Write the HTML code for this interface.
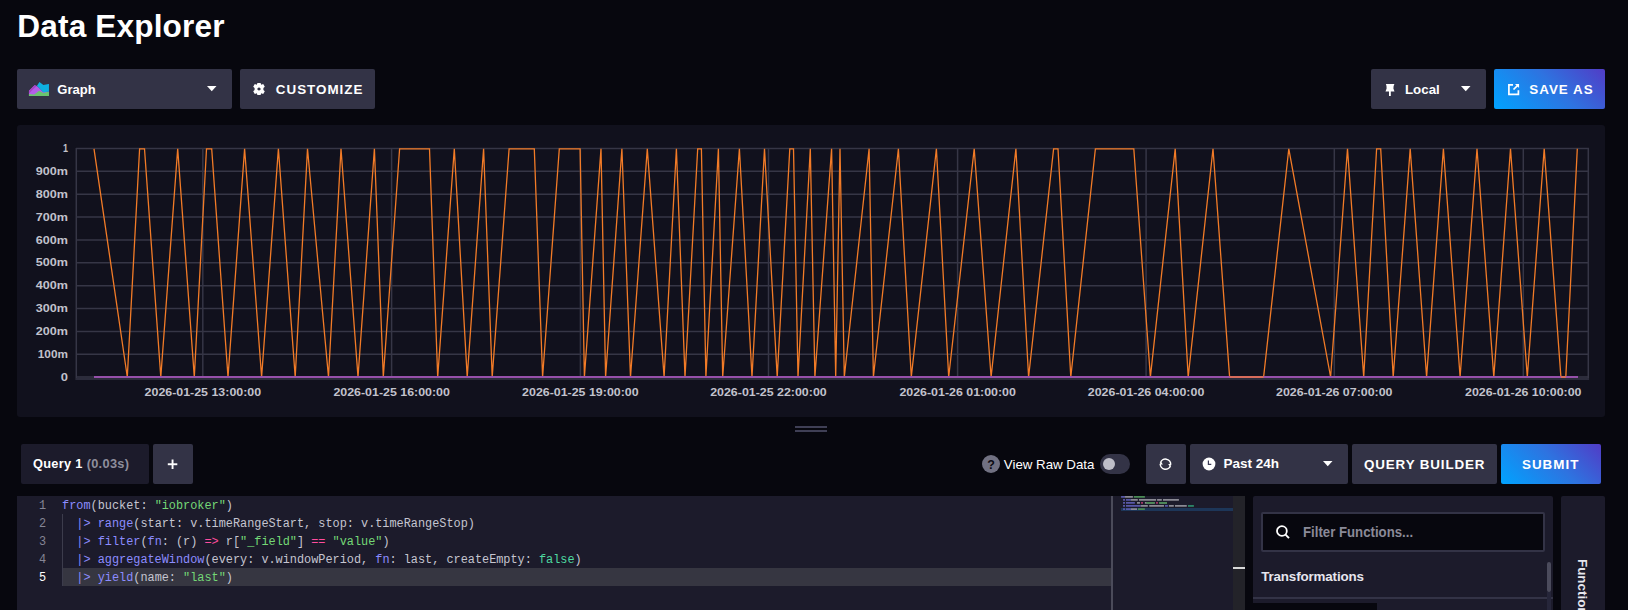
<!DOCTYPE html>
<html><head><meta charset="utf-8">
<style>
*{margin:0;padding:0;box-sizing:border-box}
html,body{width:1628px;height:610px;overflow:hidden;background:#07070e;font-family:"Liberation Sans",sans-serif;color:#fff}
.a{position:absolute}
.t{position:absolute;white-space:nowrap;line-height:1;transform-origin:0 0}
.btn{position:absolute;background:#333346;border-radius:2px}
.code{position:absolute;font-family:"Liberation Mono",monospace;font-size:11.87px;line-height:18px;white-space:pre;color:#c5c5d0}
.kw{color:#8c8cff}.st{color:#74d876}.op{color:#ff4d9e}.bo{color:#4ed8a0}
</style></head><body>

<!-- title -->
<div class="t" id="title" style="left:17.3px;top:10.5px;font-size:31.6px;font-weight:bold;letter-spacing:0.15px">Data Explorer</div>

<!-- top buttons -->
<div class="btn" style="left:17px;top:69px;width:215px;height:40px"></div>
<svg class="a" style="left:26px;top:79px" width="26" height="20" viewBox="0 0 793 610">
 <polygon fill="#b35ee8" points="90,360 260,190 330,215 380,250 530,400 700,370 700,515 90,515"/>
 <polygon fill="#a744c4" points="90,360 260,190 330,215 200,330 90,440"/>
 <polygon fill="#0fb0e0" points="330,215 410,95 530,180 690,150 700,150 700,380 530,410 380,250"/>
 <polygon fill="#6ac46e" points="90,455 250,470 400,360 530,430 650,395 700,395 700,515 90,515"/>
</svg>
<div class="t" id="graph" style="left:57.3px;top:82.8px;font-size:13px;font-weight:bold">Graph</div>
<svg class="a" style="left:207px;top:86px" width="10" height="6"><polygon fill="#fff" points="0,0 9.5,0 4.75,5.2"/></svg>

<div class="btn" style="left:240px;top:69px;width:135px;height:40px"></div>
<svg class="a" style="left:253px;top:83px" width="12" height="12" viewBox="-6 -6 12 12">
 <path fill="#fff" fill-rule="evenodd" d="M-1.6,-6 L1.6,-6 L2.2,-4.2 L4.2,-5 L5.8,-2.2 L4.4,-0.9 L4.4,0.9 L5.8,2.2 L4.2,5 L2.2,4.2 L1.6,6 L-1.6,6 L-2.2,4.2 L-4.2,5 L-5.8,2.2 L-4.4,0.9 L-4.4,-0.9 L-5.8,-2.2 L-4.2,-5 L-2.2,-4.2 Z M0,-1.6 A1.6,1.6 0 1 0 0.01,-1.6 Z"/>
</svg>
<div class="t" id="cust" style="left:275.8px;top:82.6px;font-size:13.4px;font-weight:bold;letter-spacing:1px">CUSTOMIZE</div>

<div class="btn" style="left:1371px;top:69px;width:115px;height:40px"></div>
<svg class="a" style="left:1385px;top:83px" width="10" height="14" viewBox="0 0 10 14">
 <path fill="#fff" d="M0.9,0.9 L9.4,0.9 Q8,3.5 8.4,5.5 L9.5,8.6 L0.5,8.6 L1.6,5.5 Q2,3.5 0.9,0.9 Z"/>
 <rect fill="#fff" x="4" y="8" width="1.8" height="5"/>
</svg>
<div class="t" id="local" style="left:1405px;top:83.2px;font-size:13.3px;font-weight:bold">Local</div>
<svg class="a" style="left:1461px;top:86px" width="10" height="6"><polygon fill="#fff" points="0,0 9.5,0 4.75,5.2"/></svg>

<div class="a" style="left:1494px;top:69px;width:111px;height:40px;border-radius:2px;background:linear-gradient(45deg,#00a3ff 0%,#2e73e0 55%,#513cc6 100%)"></div>
<svg class="a" style="left:1507px;top:83px" width="13" height="13" viewBox="0 0 13 13">
 <path fill="none" stroke="#fff" stroke-width="1.7" d="M6,1.9 L1.9,1.9 L1.9,11.4 L11.4,11.4 L11.4,7.2"/>
 <path fill="none" stroke="#fff" stroke-width="1.7" d="M6.5,6.5 L11.2,1.8"/>
 <polygon fill="#fff" points="8,1.05 12.05,1.05 12.05,5.1"/>
</svg>
<div class="t" id="saveas" style="left:1529.3px;top:82.6px;font-size:13.4px;font-weight:bold;letter-spacing:1px">SAVE AS</div>

<!-- chart panel -->
<div class="a" style="left:17px;top:125px;width:1588px;height:292px;background:#11111d;border-radius:3px"></div>
<svg class="a" style="left:0;top:0" width="1628" height="420">
 <g stroke="#363646" stroke-width="1.5"><line x1="76" y1="148.50" x2="1589" y2="148.50"/><line x1="76" y1="171.36" x2="1589" y2="171.36"/><line x1="76" y1="194.22" x2="1589" y2="194.22"/><line x1="76" y1="217.08" x2="1589" y2="217.08"/><line x1="76" y1="239.94" x2="1589" y2="239.94"/><line x1="76" y1="262.80" x2="1589" y2="262.80"/><line x1="76" y1="285.66" x2="1589" y2="285.66"/><line x1="76" y1="308.52" x2="1589" y2="308.52"/><line x1="76" y1="331.38" x2="1589" y2="331.38"/><line x1="76" y1="354.24" x2="1589" y2="354.24"/><line x1="76" y1="377.10" x2="1589" y2="377.10"/><line x1="202.8" y1="148" x2="202.8" y2="379"/><line x1="391.6" y1="148" x2="391.6" y2="379"/><line x1="580.4" y1="148" x2="580.4" y2="379"/><line x1="768.5" y1="148" x2="768.5" y2="379"/><line x1="957.6" y1="148" x2="957.6" y2="379"/><line x1="1146.1" y1="148" x2="1146.1" y2="379"/><line x1="1334.3" y1="148" x2="1334.3" y2="379"/><line x1="1523.3" y1="148" x2="1523.3" y2="379"/>
  <line x1="76.3" y1="148" x2="76.3" y2="380"/><line x1="1588.3" y1="148" x2="1588.3" y2="380"/><line x1="76" y1="379.1" x2="1589" y2="379.1" stroke="#2c2c3c" stroke-width="2"/>
 </g>
 <g fill="#c2c2cc" font-family="Liberation Sans" font-weight="bold" font-size="10.5"><text x="62.9" y="152.1" textLength="5.0" lengthAdjust="spacingAndGlyphs">1</text><text x="35.7" y="175.0" textLength="32.2" lengthAdjust="spacingAndGlyphs">900m</text><text x="35.7" y="197.8" textLength="32.2" lengthAdjust="spacingAndGlyphs">800m</text><text x="35.7" y="220.7" textLength="32.2" lengthAdjust="spacingAndGlyphs">700m</text><text x="35.7" y="243.5" textLength="32.2" lengthAdjust="spacingAndGlyphs">600m</text><text x="35.7" y="266.4" textLength="32.2" lengthAdjust="spacingAndGlyphs">500m</text><text x="35.7" y="289.3" textLength="32.2" lengthAdjust="spacingAndGlyphs">400m</text><text x="35.7" y="312.1" textLength="32.2" lengthAdjust="spacingAndGlyphs">300m</text><text x="35.7" y="335.0" textLength="32.2" lengthAdjust="spacingAndGlyphs">200m</text><text x="37.8" y="357.8" textLength="30.1" lengthAdjust="spacingAndGlyphs">100m</text><text x="60.7" y="380.7" textLength="7.2" lengthAdjust="spacingAndGlyphs">0</text></g>
 <g fill="#c2c2cc" font-family="Liberation Sans" font-weight="bold" font-size="11.2"><text x="144.6" y="396" textLength="116.5" lengthAdjust="spacingAndGlyphs">2026-01-25 13:00:00</text><text x="333.4" y="396" textLength="116.5" lengthAdjust="spacingAndGlyphs">2026-01-25 16:00:00</text><text x="522.1" y="396" textLength="116.5" lengthAdjust="spacingAndGlyphs">2026-01-25 19:00:00</text><text x="710.2" y="396" textLength="116.5" lengthAdjust="spacingAndGlyphs">2026-01-25 22:00:00</text><text x="899.4" y="396" textLength="116.5" lengthAdjust="spacingAndGlyphs">2026-01-26 01:00:00</text><text x="1087.8" y="396" textLength="116.5" lengthAdjust="spacingAndGlyphs">2026-01-26 04:00:00</text><text x="1276.0" y="396" textLength="116.5" lengthAdjust="spacingAndGlyphs">2026-01-26 07:00:00</text><text x="1465.0" y="396" textLength="116.5" lengthAdjust="spacingAndGlyphs">2026-01-26 10:00:00</text></g>
 <polyline fill="none" stroke="#f27b27" stroke-width="1.3" stroke-linejoin="miter" points="94.0,148.8 127.3,377.0 139.6,148.8 144.5,148.8 160.8,377.0 177.7,148.8 194.3,377.0 206.5,148.8 211.7,148.8 228.0,377.0 244.6,148.8 261.6,377.0 278.4,148.8 295.2,377.0 307.5,148.8 328.5,377.0 341.0,148.8 358.0,377.0 374.4,148.8 383.3,377.0 399.6,148.8 429.5,148.8 437.7,377.0 454.3,148.8 467.2,377.0 483.6,148.8 492.2,377.0 509.1,148.8 534.3,148.8 542.6,377.0 559.3,148.8 580.1,148.8 584.4,377.0 601.0,148.8 605.6,377.0 621.9,148.8 630.5,377.0 647.3,148.8 664.1,377.0 676.4,148.8 685.0,377.0 697.7,148.8 701.4,148.8 705.9,377.0 718.4,148.8 722.7,377.0 739.4,148.8 752.0,377.0 764.5,148.8 777.2,377.0 789.8,148.8 793.5,148.8 798.0,377.0 810.3,148.8 814.9,377.0 831.6,148.8 835.7,377.0 840.0,148.8 844.3,377.0 869.1,148.8 873.4,377.0 898.4,148.8 911.3,377.0 936.4,148.8 948.7,377.0 974.2,148.8 991.1,377.0 1015.9,148.8 1028.6,377.0 1053.6,148.8 1058.0,148.8 1070.8,377.0 1095.4,148.8 1133.8,148.8 1150.4,377.0 1175.2,148.8 1188.2,377.0 1213.0,148.8 1229.6,377.0 1263.6,377.0 1288.8,148.8 1330.6,377.0 1347.5,148.8 1363.7,377.0 1376.6,148.8 1380.7,148.8 1393.2,377.0 1410.2,148.8 1426.6,377.0 1443.4,148.8 1460.1,377.0 1477.0,148.8 1493.8,377.0 1510.5,148.8 1527.3,377.0 1544.2,148.8 1560.9,377.0 1565.8,377.0 1577.3,148.8"/>
 <line x1="94" y1="377" x2="1578" y2="377" stroke="#9650aa" stroke-width="2.2"/>
 <line x1="1229.6" y1="377" x2="1263.6" y2="377" stroke="#d86c5c" stroke-width="2"/><line x1="1560.9" y1="377" x2="1565.8" y2="377" stroke="#d86c5c" stroke-width="2"/>
</svg>

<!-- resize handle -->
<div class="a" style="left:795px;top:426px;width:32px;height:2px;background:#3f3f55"></div>
<div class="a" style="left:795px;top:430px;width:32px;height:2px;background:#3f3f55"></div>

<!-- query row -->
<div class="a" style="left:21px;top:444px;width:128px;height:40px;background:#1c1b2b;border-radius:2px"></div>
<div class="t" id="query" style="left:33px;top:457.8px;font-size:12.8px;letter-spacing:0.3px;font-weight:bold">Query 1 <span style="color:#8e8e9c">(0.03s)</span></div>
<div class="btn" style="left:153px;top:444px;width:40px;height:40px"></div>
<svg class="a" style="left:167px;top:459px" width="11" height="11"><rect fill="#fff" x="0.8" y="4.3" width="9.5" height="1.9"/><rect fill="#fff" x="4.6" y="0.5" width="1.9" height="9.5"/></svg>

<svg class="a" style="left:981px;top:454px" width="20" height="20" viewBox="0 0 20 20">
 <circle cx="10" cy="10" r="9" fill="#717182"/>
 <text x="10" y="14.5" text-anchor="middle" font-family="Liberation Sans" font-weight="bold" font-size="12.5" fill="#0b0b12">?</text>
</svg>
<div class="t" id="raw" style="left:1003.8px;top:458.2px;font-size:13.3px">View Raw Data</div>
<div class="a" style="left:1100px;top:454px;width:30px;height:20px;border-radius:10px;background:#333346"></div>
<div class="a" style="left:1102.7px;top:458px;width:12.2px;height:12.2px;border-radius:50%;background:#bebec8"></div>

<div class="btn" style="left:1146px;top:444px;width:40px;height:40px"></div>
<svg class="a" style="left:1159px;top:458px" width="13" height="13" viewBox="-6.5 -6.2 13 13">
 <path fill="none" stroke="#fff" stroke-width="1.5" d="M-5.0,-1.3 A5.2,5.2 0 0 1 5.2,0.3"/>
 <path fill="none" stroke="#fff" stroke-width="1.5" d="M5.0,1.3 A5.2,5.2 0 0 1 -5.2,-0.3"/>
 <polygon fill="#fff" points="5.9,-0.2 2.6,-0.2 4.5,2.4"/>
 <polygon fill="#fff" points="-5.9,0.2 -2.6,0.2 -4.5,-2.4"/>
</svg>

<div class="btn" style="left:1190px;top:444px;width:158px;height:40px"></div>
<svg class="a" style="left:1202px;top:457px" width="14" height="14" viewBox="0 0 14 14">
 <circle cx="7" cy="7" r="6.4" fill="#fff"/>
 <path fill="none" stroke="#3a3a55" stroke-width="1.2" d="M6.4,3.4 L6.4,7.3 L9.3,7.3"/>
</svg>
<div class="t" id="past" style="left:1223.5px;top:456.9px;font-size:13.5px;font-weight:bold">Past 24h</div>
<svg class="a" style="left:1323px;top:461px" width="10" height="6"><polygon fill="#fff" points="0,0 9.5,0 4.75,5.2"/></svg>

<div class="btn" style="left:1352px;top:444px;width:145px;height:40px"></div>
<div class="t" id="qb" style="left:1364px;top:457.6px;font-size:13.4px;font-weight:bold;letter-spacing:0.86px">QUERY BUILDER</div>
<div class="a" style="left:1501px;top:444px;width:100px;height:40px;border-radius:2px;background:linear-gradient(45deg,#00a3ff 0%,#2e73e0 55%,#513cc6 100%)"></div>
<div class="t" id="submit" style="left:1522px;top:457.6px;font-size:13.4px;font-weight:bold;letter-spacing:1px">SUBMIT</div>

<!-- editor -->
<div class="a" style="left:17px;top:496px;width:1228px;height:114px;background:#1c1b2b"></div>
<div class="a" style="left:62px;top:568px;width:1049px;height:18px;background:#363641"></div>
<div class="a" style="left:62px;top:514px;width:1px;height:72px;background:#3c3c4c"></div>
<div class="code" style="left:17px;top:497px;width:29px;text-align:right;color:#858595">1
2
3
4
<span style="color:#fff">5</span></div>
<div class="code" style="left:62.1px;top:497px"><span class="kw">from</span>(bucket: <span class="st">"iobroker"</span>)
  <span class="kw">|&gt;</span> <span class="kw">range</span>(start: v.timeRangeStart, stop: v.timeRangeStop)
  <span class="kw">|&gt;</span> <span class="kw">filter</span>(<span class="kw">fn</span>: (r) <span class="op">=&gt;</span> r[<span class="st">"_field"</span>] <span class="op">==</span> <span class="st">"value"</span>)
  <span class="kw">|&gt;</span> <span class="kw">aggregateWindow</span>(every: v.windowPeriod, <span class="kw">fn</span>: last, createEmpty: <span class="bo">false</span>)
  <span class="kw">|&gt;</span> <span class="kw">yield</span>(name: <span class="st">"last"</span>)</div>

<!-- minimap -->
<div class="a" style="left:1111px;top:496px;width:2px;height:114px;background:#4b4b5a"></div>
<div class="a" style="left:1121px;top:508px;width:112px;height:3px;background:#1d3658"></div>
<div class="a" style="left:1233px;top:496px;width:12px;height:114px;background:#232329"></div>
<div class="a" style="left:1233px;top:567px;width:12px;height:2px;background:#d8d8d8"></div>
<svg class="a" style="left:1100px;top:490px" width="160" height="36" viewBox="0 0 813 183">
 <g stroke-width="9">
  <path stroke="#5858a8" d="M107,35 H127 M132,50 H157 M132,66 H177 M132,81 H207 M132,97 H157"/>
  <path stroke="#8a8a94" d="M127,35 H167 M157,50 H192 M198,50 H285 M290,50 H314 M320,50 H401 M188,66 H203 M228,66 H278 M302,66 H340 M207,81 H243 M250,81 H325 M350,81 H375 M381,81 H441 M157,97 H188"/>
  <path stroke="#4a8a55" d="M172,35 H228 M235,66 H278 M300,66 H340 M193,97 H228"/>
  <path stroke="#b03a70" d="M209,66 H218 M285,66 H294"/>
  <path stroke="#2e8a6a" d="M447,81 H477"/>
  <path stroke="#5858a8" d="M117,50 H127 M117,66 H127 M117,81 H127 M117,97 H127 M330,81 H345"/>
 </g>
</svg>

<!-- functions panel -->
<div class="a" style="left:1253px;top:496px;width:300px;height:114px;background:#1c1b2b;border-radius:2px 2px 0 0"></div>
<div class="a" style="left:1261px;top:512px;width:284px;height:40px;background:#07070e;border:2px solid #333346;border-radius:2px"></div>
<svg class="a" style="left:1275px;top:524px" width="16" height="16" viewBox="0 0 16 16">
 <circle cx="6.9" cy="7" r="4.9" fill="none" stroke="#fff" stroke-width="1.8"/>
 <path stroke="#fff" stroke-width="1.9" d="M10.3,10.4 L14,14.2"/>
</svg>
<div class="t" id="filter" style="left:1303px;top:525px;font-size:14.4px;transform:scaleX(0.918);font-weight:bold;color:#8a8a98">Filter Functions...</div>
<div class="t" id="transf" style="left:1261.2px;top:570px;font-size:13.4px;letter-spacing:-0.15px;font-weight:bold;color:#e6e6ee">Transformations</div>
<div class="a" style="left:1253px;top:597px;width:300px;height:2px;background:#333346"></div>
<div class="a" style="left:1253px;top:603px;width:124px;height:7px;background:#07070e"></div>
<div class="a" style="left:1547px;top:562px;width:4px;height:30px;border-radius:2px;background:#4b4b5c"></div>
<div class="a" style="left:1547px;top:592px;width:4px;height:18px;background:#26263a"></div>

<div class="a" style="left:1561px;top:496px;width:44px;height:114px;background:#1c1b2b;border-radius:2px 2px 0 0"></div>
<div class="t" id="functab" style="left:1589px;top:559.4px;font-size:13.4px;font-weight:bold;transform:rotate(90deg);color:#e6e6ee">Functions</div>

</body></html>
